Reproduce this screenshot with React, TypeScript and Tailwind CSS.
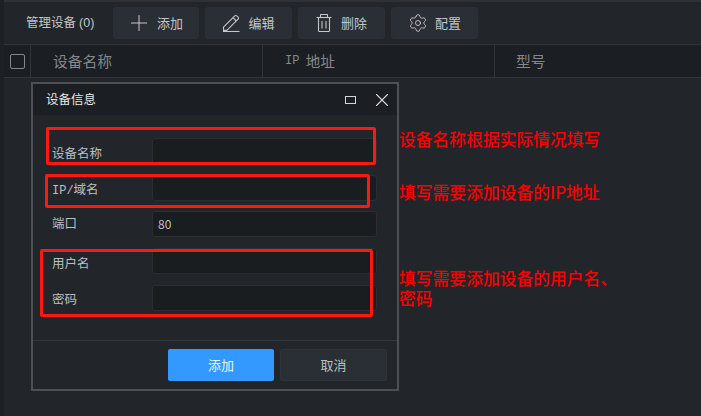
import React from "react";
import { Plus, Settings, X } from "lucide-react";

const FONT = { fontFamily: '"Noto Sans CJK SC", "Liberation Sans", sans-serif' };
const MONO = { fontFamily: '"Liberation Mono", monospace' };
const SANS = { fontFamily: '"Liberation Sans", sans-serif' };

function PencilLine() {
  return (
    <svg width="18" height="18" viewBox="0 0 18 18" fill="none" stroke="currentColor" strokeWidth="1.1" strokeLinejoin="round">
      <path d="M1.5 13.2 12.8 1.9a1.4 1.4 0 0 1 2 0l1.3 1.3a1.4 1.4 0 0 1 0 2L4.8 16.4H1.5z" />
      <path d="M11 3.7l3.3 3.3" />
      <path d="M1 17.5h16.5" />
    </svg>
  );
}

function TrashTall() {
  return (
    <svg width="16" height="18" viewBox="0 0 16 18" fill="none" stroke="currentColor" strokeWidth="1.1">
      <path d="M0.5 3.5h15" />
      <path d="M4.5 3.5V1a.5.5 0 0 1 .5-.5h6a.5.5 0 0 1 .5.5v2.5" />
      <path d="M2.5 3.5v13a1 1 0 0 0 1 1h9a1 1 0 0 0 1-1v-13" />
      <path d="M6 7v7.5M10 7v7.5" />
    </svg>
  );
}

function ToolButton({ icon, label, width, gap }: { icon: React.ReactNode; label: string; width: string; gap: string }) {
  return (
    <button className={`flex h-[32px] ${width} ${gap} items-center justify-center rounded-[3px] border border-[#2b2f36] bg-[#2a2e35] text-[13px] text-[#c4c6c8]`}>
      {icon}
      <span>{label}</span>
    </button>
  );
}

function Field({ label, value, mb, shift }: { label: React.ReactNode; value?: string; mb: string; shift: string }) {
  return (
    <div className={`flex items-center ${mb}`}>
      <div className={`w-[108px] pl-[8px] text-[12.5px] text-[#bcbfc2] ${shift}`}>{label}</div>
      <div className="flex h-[26px] w-[225px] items-center rounded-[3px] border border-[#2a2e33] bg-[#1a1d20] pl-[5px] text-[12px] text-[#bcbfc2]">
        {value}
      </div>
    </div>
  );
}

function Box({ cls }: { cls: string }) {
  return <div className={`absolute rounded-[2px] border-[3px] border-[#fa1a12] ${cls}`} />;
}

function Note({ cls, children }: { cls: string; children: React.ReactNode }) {
  return <div className={`absolute text-[16.8px] leading-[20px] font-medium text-[#f80000] ${cls}`}>{children}</div>;
}

export default function App() {
  return (
    <div style={FONT} className="relative flex h-[416px] w-[701px] overflow-hidden bg-[#22262a]">
      <div className="w-[4px] shrink-0 bg-[#1d2024]" />
      <div className="flex min-w-0 flex-1 flex-col border-t-2 border-[#2e3236]">
        <div className="flex h-[42px] items-center gap-[6px] pl-[22px]">
          <span className="w-[81px] text-[12.5px] whitespace-nowrap text-[#c4c6c8]">
            管理设备<span className="ml-[3px]" style={SANS}>(0)</span>
          </span>
          <ToolButton width="w-[86px]" gap="gap-[8px]" label="添加" icon={<Plus size={26} strokeWidth={0.95} className="-mr-[3px] -ml-[3px]" />} />
          <ToolButton width="w-[87px]" gap="gap-[8px]" label="编辑" icon={<PencilLine />} />
          <ToolButton width="w-[87px]" gap="gap-[9px]" label="删除" icon={<TrashTall />} />
          <ToolButton width="w-[87px]" gap="gap-[7px]" label="配置" icon={<Settings size={20} strokeWidth={1.1} />} />
        </div>
        <div className="flex h-[34px] border-y border-[#31353a] bg-[#1b1e22] text-[14.75px] text-[#85888b]">
          <div className="flex w-[27px] items-center justify-center border-r border-[#31353a]">
            <div className="h-[15px] w-[15px] rounded-[2px] border border-[#85888b]" />
          </div>
          <div className="flex w-[232px] items-center border-r border-[#31353a] pl-[22px]">设备名称</div>
          <div className="flex w-[232px] items-center border-r border-[#31353a] pl-[22px]">
            <span className="text-[12px]" style={MONO}>IP</span>
            <span className="ml-[6px]">地址</span>
          </div>
          <div className="flex items-center pl-[21px]">型号</div>
        </div>
        <div className="flex-1" />
      </div>

      <div className="absolute top-[82px] left-[31px] flex h-[309px] w-[368px] flex-col border-2 border-[#4c5155] bg-[#22262a]">
        <div className="flex h-[31px] shrink-0 items-center justify-between bg-[#1b1e22] pr-[4px] pl-[13px] text-[12.5px] text-[#e6e7e8]">
          <span>设备信息</span>
          <div className="flex items-center gap-[15px]">
            <div className="h-[8px] w-[11px] border border-[#d5d6d7]" />
            <X size={22} strokeWidth={1.2} className="text-[#d5d6d7]" />
          </div>
        </div>
        <div className="flex-1 pt-[23px] pl-[11px]">
          <Field shift="pt-[4px]" mb="mb-[11px]" label="设备名称" />
          <Field shift="pt-[4px]" mb="mb-[10px]" label={<><span className="text-[12px]" style={MONO}>IP/</span>域名</>} />
          <Field shift="pb-[2px]" mb="mb-[11px]" label="端口" value="80" />
          <Field shift="pt-[4px]" mb="mb-[11px]" label="用户名" />
          <Field shift="pt-[3px]" mb="mb-0" label="密码" />
        </div>
        <div className="flex h-[49px] shrink-0 items-center justify-end gap-[6px] border-t border-[#33373b] pr-[10px] text-[13px]">
          <button className="h-[32px] w-[106px] rounded-[2px] bg-[#3399ff] text-[#e9f3fd]">添加</button>
          <button className="h-[32px] w-[107px] rounded-[2px] border border-[#2f3339] bg-[#2a2e35] text-[#bcbfc2]">取消</button>
        </div>
      </div>

      <Box cls="top-[127px] left-[46px] h-[38px] w-[330px]" />
      <Box cls="top-[174px] left-[45px] h-[34px] w-[325px]" />
      <Box cls="top-[249px] left-[40px] h-[68px] w-[333px]" />
      <Note cls="top-[129px] left-[399px]">设备名称根据实际情况填写</Note>
      <Note cls="top-[182px] left-[399px]">填写需要添加设备的IP地址</Note>
      <Note cls="top-[268px] left-[399px] w-[222px]">填写需要添加设备的用户名、密码</Note>
    </div>
  );
}
